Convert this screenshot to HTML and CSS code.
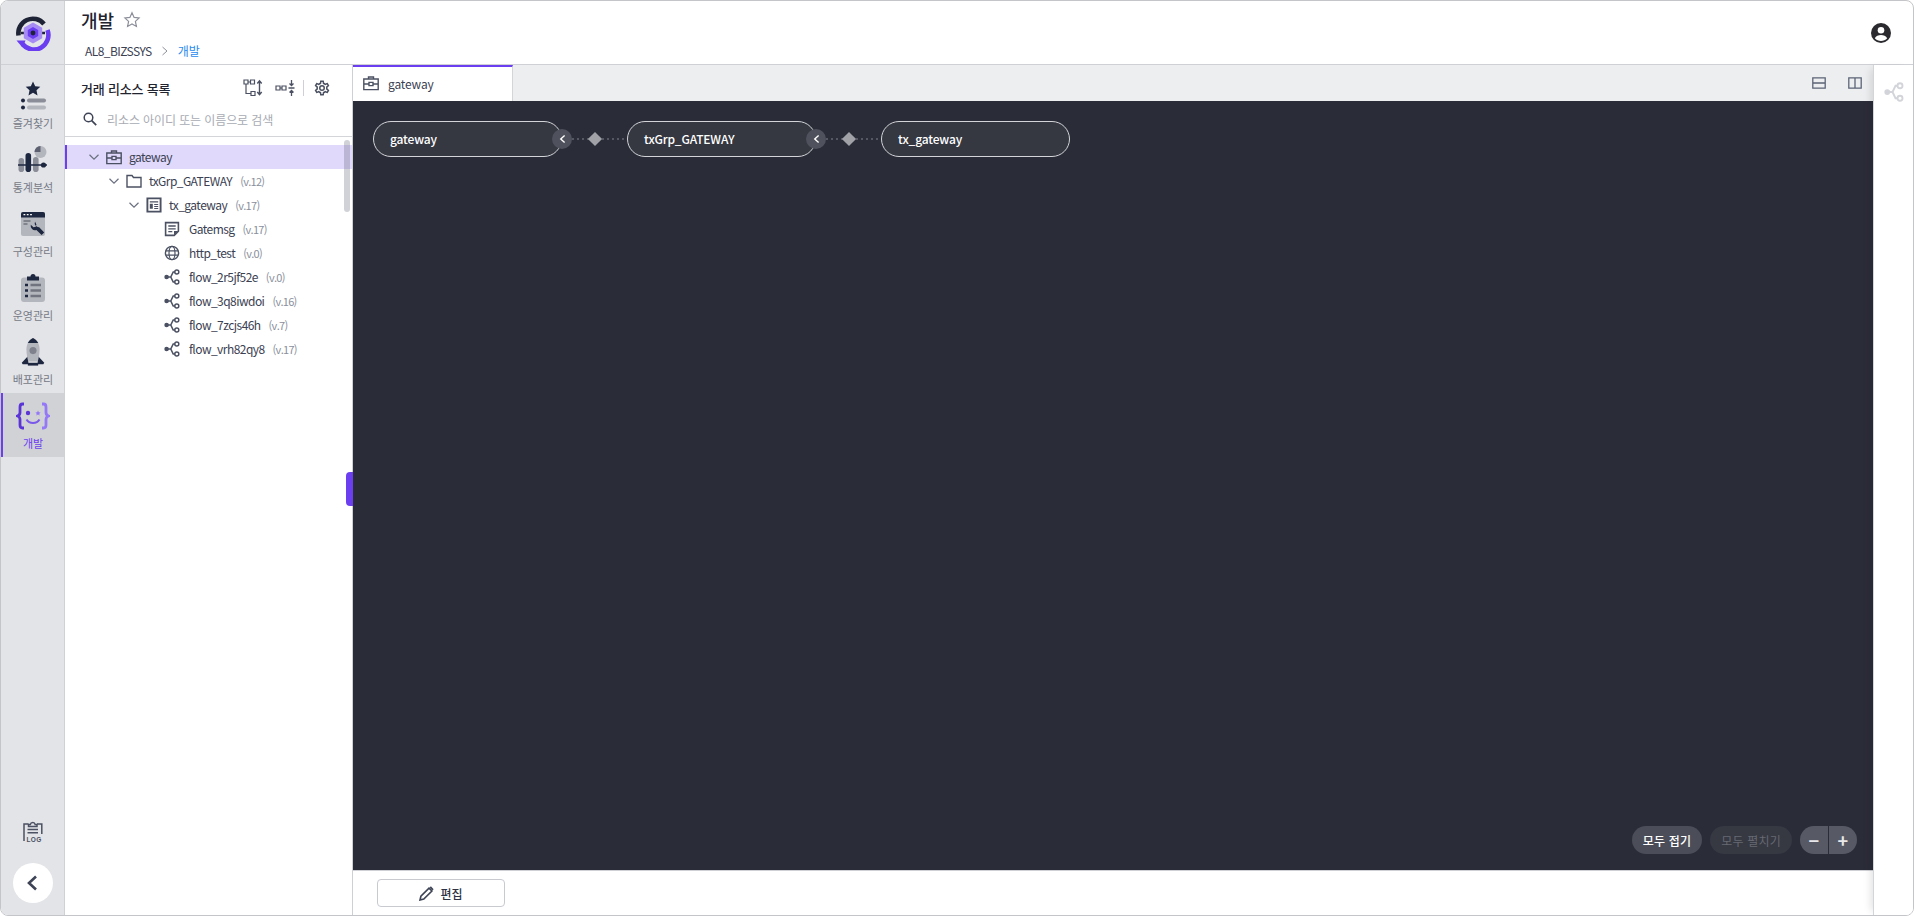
FILE: index.html
```html
<!DOCTYPE html>
<html lang="ko">
<head>
<meta charset="utf-8">
<title>개발</title>
<link rel="stylesheet" href="styles.css">
</head>
<body>
<svg class="defs" width="0" height="0" aria-hidden="true">
  <symbol id="i-case" viewBox="0 0 16 16"><path d="M5.500 4V2h5v2M.8 4h14.400v10.600H.8zM.8 9h5.200M10 9h5.200M6 7.400h4v3.200H6z" fill="none" stroke="currentColor" stroke-width="1.400"/></symbol>
  <symbol id="i-flow" viewBox="0 0 16 16"><circle cx="2.600" cy="8" r="2.300" fill="currentColor"/><path d="M3 8h4.200M10.800 3H9.200L6.800 8l2.400 5h1.600" fill="none" stroke="currentColor" stroke-width="1.500"/><circle cx="12.800" cy="3" r="2" fill="none" stroke="currentColor" stroke-width="1.500"/><circle cx="12.800" cy="13" r="2" fill="none" stroke="currentColor" stroke-width="1.500"/></symbol>
  <symbol id="i-chev" viewBox="0 0 12 12"><path d="M1.500 3.800 6 8.200l4.500-4.400" fill="none" stroke="currentColor" stroke-width="1.200"/></symbol>
</svg>
<div class="frame">
  <nav class="rail">
    <div class="logo">
      <svg width="36" height="36" viewBox="0 0 36 36"><path d="M3.500 20.500A14.500 14.500 0 0 1 29 9" fill="none" stroke="#1e2336" stroke-width="4.600"/><path d="M32.500 15A14.500 14.500 0 0 1 7.500 29" fill="none" stroke="#6a3df0" stroke-width="4.600"/><path d="M1.500 25.500h9l-3 7z" fill="#6a3df0"/><path d="M6 18h24" stroke="#1e2336" stroke-width="2.400"/><path d="M18 7.500l9.200 5.200v10.600L18 28.500l-9.200-5.200V12.700z" fill="#a78bf5"/><path d="M18 12l5.200 3v6L18 24l-5.200-3v-6z" fill="#6a3df0"/><circle cx="18" cy="18" r="2.400" fill="#1e2336"/></svg>
    </div>
    <ul class="rail-list">
      <li class="rail-item">
        <svg width="30" height="30" viewBox="0 0 30 30"><path d="M15 .5l2.200 4.700 5.100.6-3.800 3.500 1 5.100-4.500-2.600-4.500 2.600 1-5.100-3.800-3.500 5.100-.6z" fill="#1e2740"/><circle cx="5" cy="19.500" r="2" fill="#1e2740"/><circle cx="5" cy="26.500" r="2" fill="#1e2740"/><rect x="9" y="17.500" width="19" height="4" rx="2" fill="#8b8e98"/><rect x="9" y="24.500" width="19" height="4" rx="2" fill="#b4b6bd"/></svg>
        <span>즐겨찾기</span>
      </li>
      <li class="rail-item">
        <svg width="30" height="30" viewBox="0 0 30 30"><circle cx="22.500" cy="7" r="6" fill="#b4b6bd"/><path d="M22.500 7V1a6 6 0 0 0-6 6z" fill="#5c6070"/><rect x=".5" y="13" width="5.600" height="14" rx="2.800" fill="#8b8e98"/><rect x="15" y="12" width="5.600" height="15" rx="2.800" fill="#8b8e98"/><path d="M0 20h29" stroke="#1e2740" stroke-width="1.300"/><rect x="7.500" y="8" width="5.600" height="19" rx="2.800" fill="#1e2740"/><circle cx="25.500" cy="20" r="2.600" fill="#1e2740"/></svg>
        <span>통계분석</span>
      </li>
      <li class="rail-item">
        <svg width="26" height="26" viewBox="0 0 26 26"><rect x="1" y="1" width="24" height="24" rx="2" fill="#b4b6bd"/><path d="M1 3a2 2 0 0 1 2-2h20a2 2 0 0 1 2 2v3.500H1z" fill="#1e2740"/><path d="M3.500 3.700h1.800M6.800 3.700h1.800M10.100 3.700h1.800" stroke="#fff" stroke-width="1.300"/><path d="M3.500 10h7M3.500 13h4" stroke="#6f727c" stroke-width="1.300"/><path d="M15 10.500a4.300 4.300 0 0 0 4.200 5.800l5 5.200-2.600 2.600-5.200-5.200a4.300 4.300 0 0 1-5.600-5.200l2.700 2.600 2.300-.6.600-2.300z" fill="#1e2740"/></svg>
        <span>구성관리</span>
      </li>
      <li class="rail-item">
        <svg width="26" height="30" viewBox="0 0 26 30"><rect x="1" y="4.500" width="24" height="24.500" rx="3" fill="#b4b6bd"/><path d="M7 3.500h3.500a2.500 2.500 0 0 1 5 0H19v4H7z" fill="#1e2740"/><path d="M5 12h3M5 17.500h3M5 23h3" stroke="#1e2740" stroke-width="2.400"/><path d="M10.500 12H21M10.500 17.500H21M10.500 23H21" stroke="#71747e" stroke-width="2.400"/></svg>
        <span>운영관리</span>
      </li>
      <li class="rail-item">
        <svg width="26" height="32" viewBox="0 0 26 32"><path d="M8 20 1 27.500l1 1.500h6zM18 20l7 7.500-1 1.500h-6z" fill="#1e2740"/><path d="M13 1c4 2 7 6 7 12 0 5-1 10-2 13H8C7 23 6 18 6 13 6 7 9 3 13 1z" fill="#b4b6bd"/><path d="M13 1c2.300 1.200 4.400 3 5.600 5.500H7.400C8.600 4 10.700 2.200 13 1z" fill="#1e2740"/><circle cx="13" cy="14.500" r="3.800" fill="#7f828c"/><rect x="7.500" y="27.500" width="11" height="3" fill="#1e2740"/></svg>
        <span>배포관리</span>
      </li>
      <li class="rail-item active">
        <svg width="34" height="28" viewBox="0 0 34 28"><path d="M8 2H6.500C4.500 2 4 3.500 4 5v5.500C4 12.500 3 13.500 1.500 14 3 14.500 4 15.500 4 17.500V23c0 1.500.5 3 2.500 3H8" fill="none" stroke="#5a34d6" stroke-width="2.800"/><path d="M26 2h1.500c2 0 2.500 1.500 2.500 3v5.500c0 2 1 3 2.500 3.500-1.500.5-2.500 1.500-2.500 3.500V23c0 1.500-.5 3-2.500 3H26" fill="none" stroke="#9478f7" stroke-width="2.800"/><circle cx="12" cy="11" r="2.200" fill="#5a34d6"/><path d="M22 8.500l.8 1.700 1.800.2-1.300 1.300.3 1.800-1.600-.9-1.600.9.300-1.800-1.300-1.300 1.800-.2z" fill="#9478f7"/><path d="M10.500 17.500c1.500 2.500 3.800 3.500 6.500 3.500s5-1 6.500-3.500" fill="none" stroke="#7a58ea" stroke-width="2"/></svg>
        <span>개발</span>
      </li>
    </ul>
    <div class="rail-foot">
      <svg class="log" width="20" height="21" viewBox="0 0 20 21"><path d="M1 20V3h4.500M18.800 13V3H14" fill="none" stroke="#4b5162" stroke-width="1.500"/><path d="M5.500 3.600h1.800a2.500 2.500 0 0 1 4.900 0H14v1.800H5.500zM4.500 8.500h10.500M4.500 11.700h10.500" fill="none" stroke="#4b5162" stroke-width="1.500"/><text class="log-text" x="3.500" y="20.500">LOG</text></svg>
      <button class="back" type="button" aria-label="접기"><svg width="12" height="16" viewBox="0 0 12 16"><path d="M10 1.500 3 8l7 6.500" fill="none" stroke="#3e4456" stroke-width="2.600"/></svg></button>
    </div>
  </nav>
  <div class="body">
    <header class="top">
      <div class="top-text">
        <div class="title-row">
          <h1>개발</h1>
          <svg width="18" height="18" viewBox="0 0 18 18"><path d="M9 1.800l2.100 4.600 5 .6-3.700 3.400 1 5-4.400-2.500-4.400 2.500 1-5L1.900 7l5-.6z" fill="none" stroke="#8d909a" stroke-width="1.200"/></svg>
        </div>
        <div class="crumbs"><span>AL8_BIZSSYS</span><svg width="8" height="10" viewBox="0 0 8 10"><path d="M1.500 1 6 5 1.500 9" fill="none" stroke="#8d909a" stroke-width="1"/></svg><a>개발</a></div>
      </div>
      <svg class="avatar" width="20" height="20" viewBox="0 0 20 20"><circle cx="10" cy="10" r="10" fill="#2b2b2f"/><circle cx="10" cy="7.300" r="3.300" fill="#fff"/><path d="M3.800 15.200c1.200-2.200 3.600-3.200 6.200-3.200s5 1 6.200 3.200C14.600 17 12.400 18 10 18s-4.600-1-6.200-2.800z" fill="#fff"/></svg>
    </header>
    <div class="work">
      <aside class="panel">
        <div class="panel-head">
          <h2>거래 리소스 목록</h2>
          <div class="tools">
            <svg width="20" height="18" viewBox="0 0 20 18"><path d="M1 1h4v4H1zM7.500 1h4v4h-4zM8 12.500h4v4H8zM3 5v9.500h5M5 3h2.500" fill="none" stroke="#4b5162" stroke-width="1.200"/><path d="M16.500 2v13.500M14.300 4.500l2.200-2.700 2.200 2.700M14.300 13l2.200 2.700 2.200-2.700" fill="none" stroke="#4b5162" stroke-width="1.400"/></svg>
            <svg width="20" height="18" viewBox="0 0 20 18"><path d="M1 7h4v4H1zM7 7h4v4H7zM5 9h2" fill="none" stroke="#4b5162" stroke-width="1.200"/><path d="M16.500 1v5.500M14.500 4.500l2 2 2-2M16.500 17v-5.500M14.500 13.500l2-2 2 2M13.500 9h6" fill="none" stroke="#4b5162" stroke-width="1.300"/></svg>
            <i class="tool-sep"></i>
            <svg width="18" height="18" viewBox="0 0 24 24"><path fill="#4b5162" d="M12,8A4,4 0 0,1 16,12A4,4 0 0,1 12,16A4,4 0 0,1 8,12A4,4 0 0,1 12,8M12,10A2,2 0 0,0 10,12A2,2 0 0,0 12,14A2,2 0 0,0 14,12A2,2 0 0,0 12,10M10,22C9.750,22 9.540,21.820 9.500,21.580L9.130,18.930C8.500,18.680 7.960,18.340 7.440,17.940L4.950,18.950C4.730,19.030 4.460,18.950 4.340,18.730L2.340,15.270C2.210,15.050 2.270,14.780 2.460,14.630L4.570,12.970L4.500,12L4.570,11L2.460,9.370C2.270,9.220 2.210,8.950 2.340,8.730L4.340,5.270C4.460,5.050 4.730,4.960 4.950,5.050L7.440,6.050C7.960,5.660 8.500,5.320 9.130,5.070L9.500,2.420C9.540,2.180 9.750,2 10,2H14C14.250,2 14.460,2.180 14.500,2.420L14.870,5.070C15.500,5.320 16.040,5.660 16.560,6.050L19.050,5.050C19.270,4.960 19.540,5.050 19.660,5.270L21.660,8.730C21.790,8.950 21.730,9.220 21.540,9.370L19.430,11L19.500,12L19.430,13L21.540,14.630C21.730,14.780 21.790,15.050 21.660,15.270L19.660,18.730C19.540,18.950 19.270,19.040 19.050,18.950L16.560,17.950C16.040,18.340 15.500,18.680 14.870,18.930L14.500,21.580C14.460,21.820 14.250,22 14,22H10M11.250,4L10.880,6.610C9.680,6.860 8.620,7.500 7.850,8.390L5.440,7.350L4.690,8.650L6.800,10.200C6.400,11.370 6.400,12.640 6.800,13.800L4.680,15.360L5.430,16.660L7.860,15.620C8.630,16.500 9.680,17.140 10.870,17.380L11.240,20H12.760L13.130,17.390C14.320,17.140 15.370,16.500 16.140,15.620L18.570,16.660L19.320,15.360L17.200,13.810C17.600,12.640 17.600,11.370 17.200,10.200L19.310,8.650L18.560,7.350L16.150,8.390C15.380,7.500 14.320,6.860 13.120,6.620L12.750,4H11.250Z"/></svg>
          </div>
        </div>
        <div class="search">
          <svg width="14" height="14" viewBox="0 0 14 14"><circle cx="5.500" cy="5.500" r="4.300" fill="none" stroke="#3e4456" stroke-width="1.500"/><path d="M8.700 8.700 13.200 13.200" stroke="#3e4456" stroke-width="1.700"/></svg>
          <span>리소스 아이디 또는 이름으로 검색</span>
        </div>
        <div class="tree">
          <ul>
            <li class="row selected lv0">
              <svg class="chev"><use href="#i-chev"/></svg>
              <svg class="ico"><use href="#i-case"/></svg>
              <span class="name">gateway</span>
            </li>
            <li class="row lv1">
              <svg class="chev"><use href="#i-chev"/></svg>
              <svg class="ico" viewBox="0 0 16 16"><path d="M1 14V2.500h5L7.500 4.500H15V14z" fill="none" stroke="currentColor" stroke-width="1.400"/></svg>
              <span class="name">txGrp_GATEWAY</span><span class="ver">(v.12)</span>
            </li>
            <li class="row lv2">
              <svg class="chev"><use href="#i-chev"/></svg>
              <svg class="ico" viewBox="0 0 16 16"><path d="M1.400 1.400h13.200v13.200H1.400z" fill="none" stroke="currentColor" stroke-width="1.900"/><path d="M3.800 4.800h8.400M8.200 7.500h4M8.200 9.500h4M8.200 11.500h4" stroke="currentColor" stroke-width="1.200"/><path d="M3.800 6.800h3v5h-3z" fill="currentColor"/></svg>
              <span class="name">tx_gateway</span><span class="ver">(v.17)</span>
            </li>
            <li class="row lv3">
              <svg class="ico" viewBox="0 0 16 16"><path d="M1.600 1.600h12.800v8.600l-4.200 4.200H1.600z" fill="none" stroke="currentColor" stroke-width="1.600"/><path d="M4.300 5h7.400M4.300 7.800h7.400M4.300 10.600h4" stroke="currentColor" stroke-width="1.300"/><path d="M10 14v-4h4.400z" fill="currentColor"/></svg>
              <span class="name">Gatemsg</span><span class="ver">(v.17)</span>
            </li>
            <li class="row lv3">
              <svg class="ico" viewBox="0 0 16 16"><circle cx="8" cy="8" r="6.600" fill="none" stroke="currentColor" stroke-width="1.400"/><ellipse cx="8" cy="8" rx="3" ry="6.600" fill="none" stroke="currentColor" stroke-width="1.200"/><path d="M1.800 5.800h12.400M1.800 10.200h12.400" stroke="currentColor" stroke-width="1.200"/></svg>
              <span class="name">http_test</span><span class="ver">(v.0)</span>
            </li>
            <li class="row lv3"><svg class="ico"><use href="#i-flow"/></svg><span class="name">flow_2r5jf52e</span><span class="ver">(v.0)</span></li>
            <li class="row lv3"><svg class="ico"><use href="#i-flow"/></svg><span class="name">flow_3q8iwdoi</span><span class="ver">(v.16)</span></li>
            <li class="row lv3"><svg class="ico"><use href="#i-flow"/></svg><span class="name">flow_7zcjs46h</span><span class="ver">(v.7)</span></li>
            <li class="row lv3"><svg class="ico"><use href="#i-flow"/></svg><span class="name">flow_vrh82qy8</span><span class="ver">(v.17)</span></li>
          </ul>
          <i class="scroll"></i>
        </div>
        <i class="resizer"></i>
      </aside>
      <main class="main">
        <div class="tabs">
          <div class="tab"><svg class="ico"><use href="#i-case"/></svg><span>gateway</span></div>
          <div class="tab-tools">
            <svg width="14" height="12" viewBox="0 0 14 12"><path d="M.8.800h12.400v10.400H.8zM.8 6h12.400" fill="none" stroke="#5c6376" stroke-width="1.300"/></svg>
            <svg width="14" height="12" viewBox="0 0 14 12"><path d="M.8.800h12.400v10.400H.8zM7 .8v10.400" fill="none" stroke="#5c6376" stroke-width="1.300"/></svg>
          </div>
        </div>
        <div class="canvas">
          <div class="chain">
            <div class="pill">gateway<b class="toggle"><svg width="7" height="10" viewBox="0 0 6 8"><path d="M4.800 1 1.500 4l3.300 3" fill="none" stroke="#fff" stroke-width="1.200"/></svg></b></div>
            <div class="link"><i></i></div>
            <div class="pill">txGrp_GATEWAY<b class="toggle"><svg width="7" height="10" viewBox="0 0 6 8"><path d="M4.800 1 1.500 4l3.300 3" fill="none" stroke="#fff" stroke-width="1.200"/></svg></b></div>
            <div class="link"><i></i></div>
            <div class="pill">tx_gateway</div>
          </div>
          <div class="controls">
            <button class="ctl" type="button">모두 접기</button>
            <button class="ctl off" type="button">모두 펼치기</button>
            <div class="zoom"><button type="button">−</button><button type="button">+</button></div>
          </div>
        </div>
        <footer class="foot">
          <button class="edit" type="button"><svg width="15" height="15" viewBox="0 0 15 15"><path d="M1 14l.9-3.800L10 2.100l2.900 2.900-8.100 8.100zM11.300.9l2.800 2.800" fill="none" stroke="#3e4456" stroke-width="1.600"/></svg>편집</button>
        </footer>
      </main>
      <aside class="strip">
        <svg width="20" height="20" viewBox="0 0 16 16"><use href="#i-flow"/></svg>
      </aside>
    </div>
  </div>
</div>
</body>
</html>
```

FILE: styles.css
```css
* { box-sizing: border-box; }
html, body { margin: 0; height: 100%; }
body {
  font-family: "Noto Sans CJK KR", "Noto Sans", sans-serif;
  font-size: 12px;
  color: #2d3345;
  background: #fff;
  overflow: hidden;
}
ul { list-style: none; margin: 0; padding: 0; }
h1, h2 { margin: 0; }
button { font-family: inherit; cursor: pointer; }
.defs { position: absolute; }
.frame {
  width: 1914px;
  height: 916px;
  display: flex;
  border: 1px solid #c4c5c8;
  border-radius: 8px;
  overflow: hidden;
}
.rail {
  width: 64px;
  flex: none;
  background: #e3e4e8;
  border-right: 1px solid #d0d1d6;
  display: flex;
  flex-direction: column;
}
.logo {
  height: 64px;
  flex: none;
  border-bottom: 1px solid #cfd0d5;
  padding-left: 1px;
  display: flex;
  align-items: center;
  justify-content: center;
}
.rail-list { padding-top: 8px; }
.rail-item {
  height: 64px;
  display: flex;
  flex-direction: column;
  align-items: center;
  padding: 8px 0 0 1px;
  color: #767a85;
  font-size: 11px;
  line-height: 16px;
  gap: 4px;
}
.rail-item svg { height: 30px; flex: none; }
.rail-item.active {
  background: #d1d2d6;
  border-left: 2px solid #6b3ff0;
  padding: 8px 1px 0 0;
  color: #6b3ff0;
}
.rail-foot {
  margin-top: auto;
  display: flex;
  flex-direction: column;
  align-items: center;
  padding: 0 0 12px 1px;
  gap: 21px;
}
.log-text {
  font-family: "Liberation Sans", sans-serif;
  font-size: 6.500px;
  font-weight: 700;
  letter-spacing: .4px;
  fill: #4b5162;
}
.back {
  width: 40px;
  height: 40px;
  border-radius: 50%;
  border: 0;
  background: #fff;
  display: flex;
  align-items: center;
  justify-content: center;
  padding: 0 3px 0 0;
}
.body { flex: 1; min-width: 0; display: flex; flex-direction: column; }
.top {
  height: 64px;
  flex: none;
  border-bottom: 1px solid #cfd0d5;
  display: flex;
  align-items: flex-start;
  justify-content: space-between;
  padding: 0 22px 0 16px;
}
.title-row { display: flex; align-items: center; gap: 9px; height: 26px; margin-top: 6px; }
.title-row h1 { font-size: 18px; font-weight: 500; color: #1f2430; line-height: 26px; }
.crumbs {
  display: flex;
  align-items: center;
  gap: 9px;
  margin: 9px 0 0 4px;
  line-height: 18px;
  color: #3b4152;
}
.crumbs span { letter-spacing: -.55px; }
.crumbs a { color: #2a8cf0; }
.avatar { margin-top: 22px; }
.work { flex: 1; min-height: 0; display: flex; }
.panel {
  width: 288px;
  flex: none;
  border-right: 1px solid #cfd0d5;
  display: flex;
  flex-direction: column;
  position: relative;
}
.panel-head {
  height: 46px;
  flex: none;
  display: flex;
  align-items: center;
  justify-content: space-between;
  padding: 0 21px 0 16px;
}
.panel-head h2 { font-size: 13px; font-weight: 500; letter-spacing: -.2px; color: #1f2430; }
.tools { display: flex; align-items: center; gap: 12px; }
.tool-sep { width: 1px; height: 16px; background: #cfd0d5; margin: 0 -3px 0 -4px; }
.search {
  height: 26px;
  flex: none;
  display: flex;
  align-items: flex-start;
  gap: 10px;
  padding: 0 0 0 18px;
  border-bottom: 1px solid #d4d5d9;
  color: #a8abb3;
  line-height: 18px;
  letter-spacing: -.1px;
}
.search svg { margin-top: 1px; }
.tree { flex: 1; position: relative; padding-top: 8px; }
.row {
  height: 24px;
  display: flex;
  align-items: center;
  color: #3b4152;
  line-height: 16px;
}
.row.selected { background: #e0d9fb; box-shadow: inset 2px 0 0 #6b3ff0; }
.lv0 { padding-left: 23px; }
.lv1 { padding-left: 43px; }
.lv2 { padding-left: 63px; }
.lv3 { padding-left: 99px; }
.chev { width: 12px; height: 12px; color: #6b7080; margin-right: 6px; flex: none; }
.ico { width: 16px; height: 16px; color: #4b5162; margin-right: 7px; flex: none; }
.lv3 .ico { margin-right: 9px; }
.name { letter-spacing: -.55px; }
.ver { color: #8a8f9c; font-size: 11px; letter-spacing: -.7px; margin-left: 8px; }
.scroll {
  position: absolute;
  right: 2px;
  top: 3px;
  width: 6px;
  height: 72px;
  border-radius: 3px;
  background: rgba(90, 94, 110, .28);
}
.resizer {
  position: absolute;
  right: -1px;
  top: 407px;
  width: 7px;
  height: 34px;
  background: #6b3ff0;
  border-radius: 4px 0 0 4px;
}
.main { flex: 1; min-width: 0; display: flex; flex-direction: column; }
.tabs {
  height: 36px;
  flex: none;
  background: #eceef0;
  display: flex;
  justify-content: space-between;
}
.tab {
  width: 160px;
  background: #fff;
  border-top: 2px solid #6b3ff0;
  border-right: 1px solid #d4d5d9;
  display: flex;
  align-items: center;
  padding: 0 0 2px 10px;
  color: #3b4152;
  letter-spacing: -.15px;
}
.tab .ico { margin-right: 9px; }
.tab-tools { display: flex; align-items: center; gap: 22px; padding: 0 11px 0 0; }
.canvas {
  flex: 1;
  background: #2a2c38;
  display: flex;
  flex-direction: column;
  justify-content: space-between;
  padding: 20px 16px 16px 20px;
}
.chain { display: flex; align-items: center; }
.pill {
  width: 189px;
  height: 36px;
  border: 1px solid #d3d4d8;
  border-radius: 18px;
  background: #353741;
  color: #fff;
  font-weight: 500;
  letter-spacing: -.15px;
  line-height: 34px;
  padding-left: 16px;
  position: relative;
}
.toggle {
  position: absolute;
  right: -11px;
  top: 7px;
  width: 20px;
  height: 20px;
  border-radius: 50%;
  background: #4f525c;
  display: flex;
  align-items: center;
  justify-content: center;
}
.link {
  width: 65px;
  height: 2px;
  background-image: repeating-linear-gradient(90deg, #555862 0 2px, transparent 2px 5px);
  display: flex;
  align-items: center;
  justify-content: center;
}
.link i {
  width: 10px;
  height: 10px;
  background: #a0a2a8;
  transform: rotate(45deg);
  flex: none;
}
.controls { display: flex; justify-content: flex-end; align-items: center; gap: 8px; }
.ctl {
  height: 28px;
  padding: 0 11px;
  border: 0;
  border-radius: 14px;
  background: #4b4e58;
  color: #fff;
  font-size: 12px;
  font-weight: 500;
  letter-spacing: .2px;
}
.ctl.off { background: #363842; color: #666972; font-weight: 400; }
.zoom { display: flex; }
.zoom button {
  width: 28.500px;
  height: 28px;
  border: 0;
  background: #575a64;
  color: #e8e8ea;
  font-size: 18px;
  font-weight: 700;
  line-height: 26px;
  padding: 0;
}
.zoom button:first-child { border-radius: 14px 0 0 14px; border-right: 1px solid #2a2c38; }
.zoom button:last-child { border-radius: 0 14px 14px 0; }
.foot {
  height: 45px;
  flex: none;
  border-top: 1px solid #cfd0d5;
  padding: 8px 0 0 24px;
}
.edit {
  width: 128px;
  height: 28px;
  border: 1px solid #c8cad0;
  border-radius: 4px;
  background: #fff;
  color: #2d3345;
  font-size: 12px;
  font-weight: 500;
  display: flex;
  align-items: center;
  justify-content: center;
  gap: 6px;
}
.strip {
  width: 40px;
  flex: none;
  background: #fff;
  border-left: 1px solid #d4d5d9;
  box-shadow: -6px 0 8px -4px rgba(0, 0, 0, .12);
  color: #d2d4d9;
  display: flex;
  justify-content: center;
  padding-top: 17px;
  position: relative;
}
```
